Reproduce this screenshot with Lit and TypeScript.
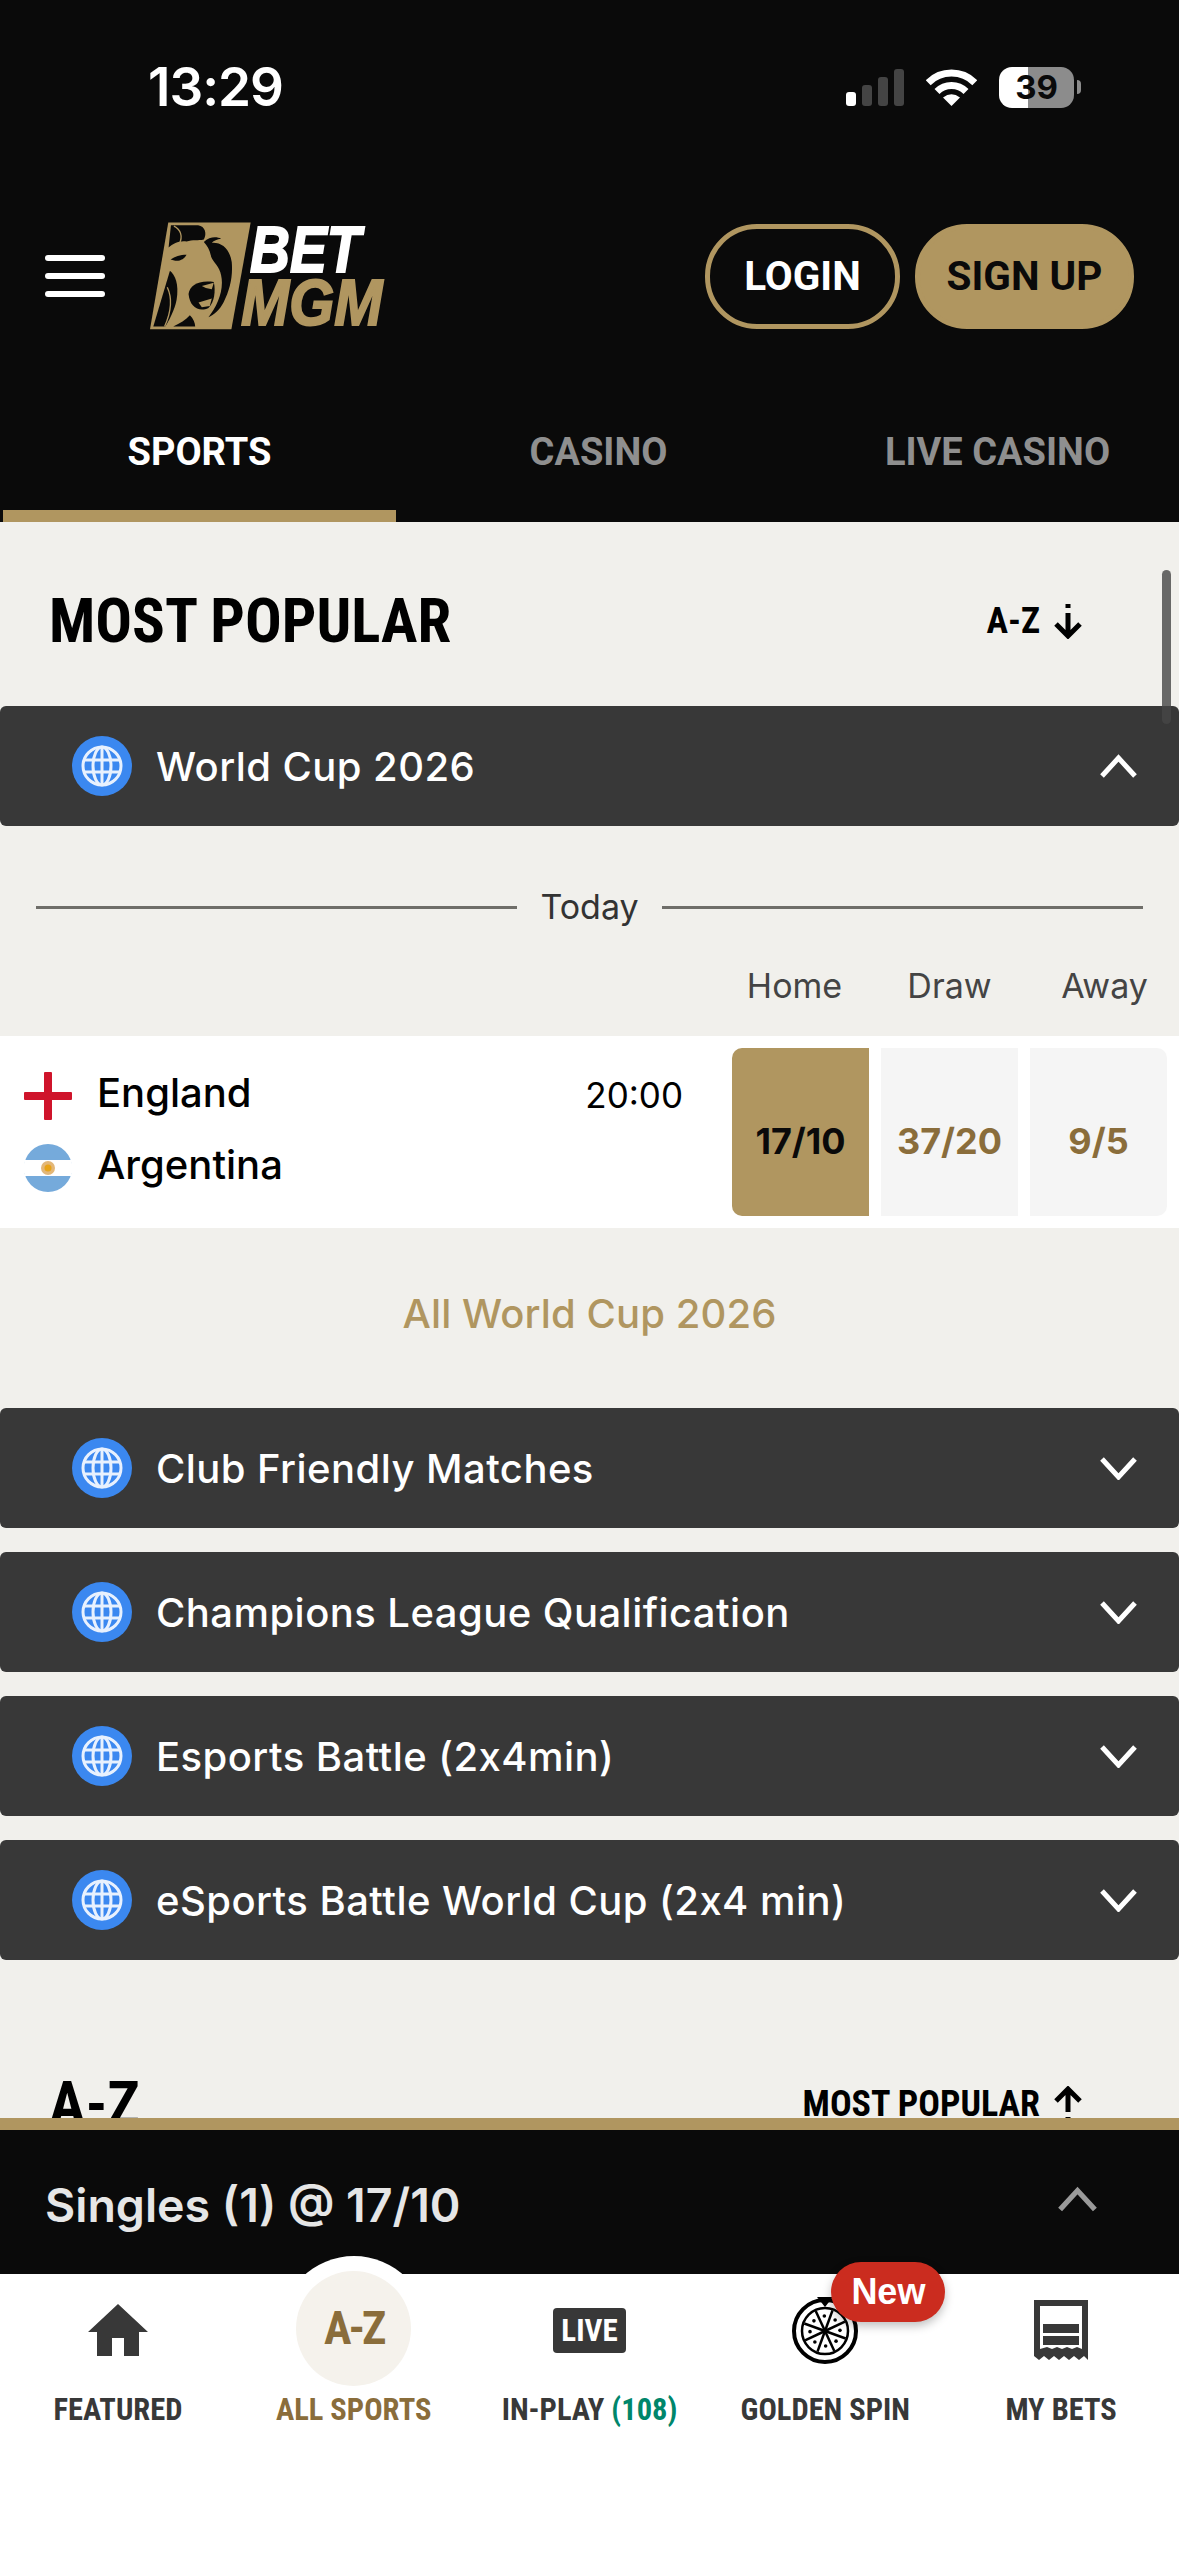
import { LitElement, html, css, svg } from "lit";
import { customElement } from "lit/decorators.js";

const leagues = [
  "Club Friendly Matches",
  "Champions League Qualification",
  "Esports Battle (2x4min)",
  "eSports Battle World Cup (2x4 min)",
];

const globe = html`<svg class="globe" viewBox="0 0 60 60">
  <circle cx="30" cy="30" r="30" fill="#3b88f0"></circle>
  <g fill="none" stroke="#e8f1fe" stroke-width="3">
    <circle cx="30" cy="30" r="19"></circle>
    <ellipse cx="30" cy="30" rx="9" ry="19"></ellipse>
    <path d="M30 11v38M12 24h36M12 36h36"></path>
  </g>
</svg>`;

const chevron = (up: boolean) => html`<svg class="chevron" viewBox="0 0 37 24">
  <path
    d=${up ? "M2 22 18.500 4 35 22" : "M2 3 18.500 21 35 3"}
    fill="none"
    stroke="currentColor"
    stroke-width="5"
  ></path>
</svg>`;

const sortArrow = (up: boolean) => html`<svg
  class="sort-arrow"
  viewBox="0 0 30 36"
>
  <g fill="none" stroke="#000" stroke-width="5">
    ${up
      ? svg`<path d="M3 15 15 3 27 15M15 4v22M15 31v4"></path>`
      : svg`<path d="M3 21 15 33 27 21M15 32V10M15 1v4"></path>`}
  </g>
</svg>`;

// spokes and pips of the golden spin wheel
const wheelParts = Array.from({ length: 8 }, (_, i) => {
  const a = ((i * 45 + 20) * Math.PI) / 180;
  const b = a + (22.5 * Math.PI) / 180;
  return svg`
    <path d="M33 34L${33 + 22 * Math.sin(a)} ${34 - 22 * Math.cos(a)}"></path>
    <circle cx=${33 + 15 * Math.sin(b)} cy=${34 - 15 * Math.cos(b)} r="1.800" fill="#000" stroke="none"></circle>
  `;
});

@customElement("app-root")
export class AppRoot extends LitElement {
  static styles = css`
    :host {
      display: flex;
      flex-direction: column;
      width: 1179px;
      height: 2556px;
      overflow: hidden;
      background: #f1f0ec;
      font-family: Inter, "Liberation Sans", sans-serif;
      color: #000;
    }

    .narrow {
      font-family: "Liberation Sans Narrow", "Roboto Condensed", "Liberation Sans", sans-serif;
      font-weight: 700;
    }

    /* top black area */
    .top {
      flex: none;
      background: #0a0a0a;
      color: #fff;
    }

    .status {
      height: 174px;
      box-sizing: border-box;
      padding: 0 98px 0 148px;
      display: flex;
      align-items: center;
      justify-content: space-between;
    }

    .time {
      font-size: 53px;
      font-weight: 600;
      letter-spacing: -1px;
    }

    .status-icons {
      display: flex;
      align-items: center;
    }

    .signal {
      width: 58px;
      height: 37px;
      margin-right: 22px;
    }

    .wifi {
      width: 51px;
      height: 37px;
      margin-right: 22px;
    }

    .battery {
      width: 75px;
      height: 41px;
      border-radius: 13px;
      background: linear-gradient(90deg, #fff 39%, #8c8c8c 39%);
      color: #0a0a0a;
      font-size: 33px;
      font-weight: 700;
      line-height: 41px;
      text-align: center;
    }

    .nub {
      width: 4px;
      height: 14px;
      margin-left: 3px;
      background: #8c8c8c;
      border-radius: 0 7px 7px 0;
    }

    .header {
      height: 204px;
      display: flex;
      align-items: center;
      padding: 0 45px;
    }

    .burger {
      width: 60px;
      display: flex;
      flex-direction: column;
      gap: 12px;
      margin-right: 45px;
    }

    .burger i {
      height: 6px;
      border-radius: 3px;
      background: #fff;
    }

    .logo {
      display: flex;
      align-items: center;
    }

    .lion {
      width: 101px;
      height: 108px;
    }

    .wordmark {
      margin-left: -10px;
      display: flex;
      flex-direction: column;
      font-family: "Liberation Sans", sans-serif;
      font-size: 65px;
      font-style: italic;
      font-weight: 700;
      line-height: 53px;
    }

    .wordmark span {
      transform-origin: left center;
      -webkit-text-stroke: 2px currentColor;
    }

    .bet {
      margin-left: 9px;
      color: #fff;
      transform: scaleX(0.85);
    }

    .mgm {
      color: #b09660;
      transform: scaleX(0.89);
    }

    .auth {
      margin-left: auto;
      display: flex;
      gap: 15px;
    }

    .auth button {
      height: 105px;
      border-radius: 52px;
      border: 5px solid #b09660;
      box-sizing: border-box;
      font-family: Roboto, sans-serif;
      font-size: 40.500px;
      font-weight: 700;
      padding: 0;
    }

    .login {
      width: 195px;
      background: #0a0a0a;
      color: #fff;
    }

    .signup {
      width: 219px;
      background: #b09660;
      color: #0a0a0a;
    }

    .tabs {
      display: grid;
      grid-template-columns: repeat(3, 393px);
      gap: 6px;
      padding-left: 3px;
      height: 144px;
      box-sizing: border-box;
      font-family: Roboto, sans-serif;
      font-weight: 700;
    }

    .tab {
      display: flex;
      align-items: center;
      justify-content: center;
      padding-top: 16px;
      font-size: 38px;
      color: #8f8f8f;
      border-bottom: 12px solid transparent;
    }

    .tab.on {
      color: #fff;
      border-bottom-color: #b09660;
    }

    /* scrolled content */
    .content {
      flex: 1;
      min-height: 0;
      overflow: hidden;
      position: relative;
    }

    .scrollbar {
      position: absolute;
      top: 48px;
      right: 8px;
      width: 9px;
      height: 154px;
      border-radius: 5px;
      background: rgba(70, 70, 70, 0.8);
    }

    .section-head {
      height: 170px;
      padding: 14px 96px 0 49px;
      display: flex;
      align-items: center;
      justify-content: space-between;
    }

    .section-head.second {
      margin-top: 45px;
    }

    .section-head h2 {
      margin: 0;
      font-size: 61px;
    }

    .sort {
      display: flex;
      align-items: center;
      gap: 13px;
      font-size: 36px;
    }

    .sort-arrow {
      width: 30px;
      height: 36px;
    }

    .league {
      height: 120px;
      display: flex;
      align-items: center;
      padding: 0 42px 0 72px;
      background: #383838;
      color: #fff;
      border-radius: 6px;
      font-size: 40px;
      font-weight: 500;
      letter-spacing: 0.45px;
    }

    .globe {
      width: 60px;
      height: 60px;
      margin-right: 24px;
    }

    .chevron {
      width: 37px;
      height: 24px;
      margin-left: auto;
    }

    .leagues {
      display: flex;
      flex-direction: column;
      gap: 24px;
    }

    .day {
      margin-top: 58px;
      padding: 0 36px;
      display: flex;
      align-items: center;
      gap: 23px;
      font-size: 34px;
      line-height: 46px;
      color: #333;
    }

    .day i {
      flex: 1;
      height: 3px;
      background: #6f6e69;
    }

    .odds-head {
      margin: 30px 0 26px;
      height: 50px;
      display: grid;
      grid-template-columns: 137px 137px 137px;
      gap: 18px;
      padding-right: 6px;
      justify-content: end;
      align-items: center;
      font-size: 34px;
      color: #444;
      text-align: center;
    }

    .match {
      height: 192px;
      box-sizing: border-box;
      background: #fff;
      padding: 12px;
      display: flex;
    }

    .teams {
      flex: 1;
      display: flex;
      flex-direction: column;
      gap: 24px;
      padding: 24px 0 0 12px;
      font-size: 40px;
      font-weight: 500;
    }

    .team {
      display: flex;
      align-items: center;
      gap: 25px;
      height: 48px;
      line-height: 42px;
    }

    .team span {
      margin-top: -6px;
    }

    .team svg {
      width: 48px;
      height: 48px;
    }

    .kick {
      margin: 22px 49px 0 0;
      font-size: 35px;
      line-height: 50px;
    }

    .prices {
      display: grid;
      grid-template-columns: repeat(3, 137px);
      gap: 12px;
    }

    .price {
      display: flex;
      align-items: center;
      justify-content: center;
      padding-top: 18px;
      background: #f5f5f5;
      color: #8a6d3b;
      font-size: 36px;
      font-weight: 700;
    }

    .price.picked {
      background: #b09660;
      color: #0a0a0a;
      border-radius: 10px 0 0 10px;
    }

    .price:last-child {
      border-radius: 0 10px 10px 0;
    }

    .all {
      height: 180px;
      box-sizing: border-box;
      padding-bottom: 10px;
      display: flex;
      align-items: center;
      justify-content: center;
      color: #b09660;
      font-size: 40px;
      font-weight: 500;
      letter-spacing: 0.1px;
    }

    /* bet slip bar */
    .slip {
      flex: none;
      height: 156px;
      box-sizing: border-box;
      border-top: 12px solid #b09660;
      background: #0a0a0a;
      color: #e6e6e6;
      padding: 6px 82px 0 45px;
      display: flex;
      align-items: center;
      justify-content: space-between;
      font-size: 46.500px;
      font-weight: 600;
    }

    .slip .chevron {
      width: 39px;
      height: 26px;
      color: #9a9a9a;
      margin-top: -12px;
    }

    /* bottom nav */
    .nav {
      flex: none;
      height: 282px;
      box-sizing: border-box;
      background: #fff;
      display: grid;
      grid-template-columns: repeat(5, 1fr);
      position: relative;
    }

    .item {
      position: relative;
      display: flex;
      flex-direction: column;
      align-items: center;
      font-size: 30.500px;
      color: #383838;
    }

    .icon {
      position: relative;
      height: 112px;
      display: flex;
      align-items: center;
      justify-content: center;
    }

    .item small {
      position: relative;
      margin-top: 4px;
      font: inherit;
      line-height: 40px;
    }

    .item em {
      font-style: normal;
      color: #00866b;
    }

    .item.on {
      color: #8a6d3b;
    }

    .bump {
      position: absolute;
      top: -18px;
      left: 50%;
      width: 148px;
      height: 148px;
      margin-left: -74px;
      border-radius: 50%;
      background: #fff;
    }

    .az {
      width: 115px;
      height: 115px;
      margin-top: -4px;
      border-radius: 50%;
      background: #f5f2ec;
      display: flex;
      align-items: center;
      justify-content: center;
      font-size: 46px;
      letter-spacing: -3px;
    }

    .live {
      width: 73px;
      height: 45px;
      border-radius: 4px;
      background: #383838;
      color: #fff;
      font-size: 31px;
      line-height: 45px;
      text-align: center;
    }

    .new {
      position: absolute;
      top: -12px;
      left: 124px;
      width: 114px;
      height: 60px;
      border-radius: 30px;
      background: #cb2c1f;
      color: #fff;
      font-family: "Liberation Sans", sans-serif;
      font-size: 36px;
      font-weight: 700;
      line-height: 60px;
      text-align: center;
      box-shadow: 0 4px 10px rgba(0, 0, 0, 0.25);
    }
  `;

  private renderLogo() {
    return html`<div class="logo">
      <svg class="lion" viewBox="60 66 304 324">
        <path d="M115 67H363L305 388H60Z" fill="#b09660"></path>
        <g fill="#0a0a0a">
          <path d="M123 75H205C226 78 232 100 222 118C205 122 188 118 170 124C150 120 130 130 116 142Z"></path>
          <path d="M222 126C240 108 262 110 274 116C262 118 252 122 246 128C276 126 300 146 306 186C310 230 300 270 282 306C270 330 252 345 236 352C262 320 284 270 274 226C270 200 250 186 244 170C240 150 232 136 222 126Z"></path>
          <path d="M176 282C180 256 205 240 252 246C258 274 254 306 236 324C208 338 180 322 176 282Z"></path>
          <path d="M120 212C135 225 148 250 140 300C134 330 118 360 106 380H70Z"></path>
          <path d="M180 346C190 355 196 370 196 380H130C150 370 168 360 180 346Z"></path>
          <path d="M122 178C135 170 150 164 170 164C164 176 150 184 136 182Z"></path>
        </g>
        <g fill="none" stroke="#b09660" stroke-width="4">
          <path d="M132 78C152 88 160 108 148 132"></path>
          <path d="M112 262C128 296 122 340 104 380"></path>
        </g>
        <path d="M216 258 252 248 246 268 228 264ZM206 308 246 296 240 318 216 322Z" fill="#b09660"></path>
      </svg>
      <div class="wordmark">
        <span class="bet">BET</span>
        <span class="mgm">MGM</span>
      </div>
    </div>`;
  }

  private renderTop() {
    return html`<div class="top">
      <div class="status">
        <span class="time">13:29</span>
        <div class="status-icons">
          <svg class="signal" viewBox="0 0 58 37">
            <rect x="0" y="23" width="10" height="14" rx="3" fill="#fff"></rect>
            <rect x="16" y="16" width="10" height="21" rx="3" fill="#444"></rect>
            <rect x="32" y="8" width="10" height="29" rx="3" fill="#444"></rect>
            <rect x="48" y="0" width="10" height="37" rx="3" fill="#444"></rect>
          </svg>
          <svg class="wifi" viewBox="0 0 51 37">
            <path d="M2.200 13.700A33 33 0 0 1 48.800 13.700M11 22.500A20.500 20.500 0 0 1 40 22.500" fill="none" stroke="#fff" stroke-width="7"></path>
            <path d="M25.500 37 17 28.500Q25.500 22 34 28.500Z" fill="#fff"></path>
          </svg>
          <div class="battery">39</div>
          <div class="nub"></div>
        </div>
      </div>
      <div class="header">
        <div class="burger"><i></i><i></i><i></i></div>
        ${this.renderLogo()}
        <div class="auth">
          <button class="login">LOGIN</button>
          <button class="signup">SIGN UP</button>
        </div>
      </div>
      <div class="tabs">
        <div class="tab on">SPORTS</div>
        <div class="tab">CASINO</div>
        <div class="tab">LIVE CASINO</div>
      </div>
    </div>`;
  }

  private renderMatch() {
    return html`<div class="day"><i></i>Today<i></i></div>
      <div class="odds-head">
        <span>Home</span><span>Draw</span><span>Away</span>
      </div>
      <div class="match">
        <div class="teams">
          <div class="team">
            <svg viewBox="0 0 48 48">
              <rect x="20" y="0" width="8" height="48" rx="1" fill="#cf142b"></rect>
              <rect x="0" y="20" width="48" height="8" rx="1" fill="#cf142b"></rect>
            </svg>
            <span>England</span>
          </div>
          <div class="team">
            <svg viewBox="0 0 48 48">
              <circle cx="24" cy="24" r="24" fill="#75aadb"></circle>
              <path d="M1 16H47A24 24 0 0 1 47 32H1A24 24 0 0 1 1 16Z" fill="#fff"></path>
              <circle cx="24" cy="24" r="7" fill="#e3b778"></circle>
              <circle cx="24" cy="24" r="3.500" fill="#e8a317"></circle>
            </svg>
            <span>Argentina</span>
          </div>
        </div>
        <div class="kick">20:00</div>
        <div class="prices">
          <div class="price picked">17/10</div>
          <div class="price">37/20</div>
          <div class="price">9/5</div>
        </div>
      </div>
      <div class="all">All World Cup 2026</div>`;
  }

  private renderLeague(name: string, open = false) {
    return html`<div class="league">${globe}<span>${name}</span>${chevron(open)}</div>`;
  }

  private renderContent() {
    return html`<div class="content">
      <div class="section-head">
        <h2 class="narrow">MOST POPULAR</h2>
        <div class="sort narrow">A-Z ${sortArrow(false)}</div>
      </div>
      ${this.renderLeague("World Cup 2026", true)} ${this.renderMatch()}
      <div class="leagues">${leagues.map((l) => this.renderLeague(l))}</div>
      <div class="section-head second">
        <h2 class="narrow">A-Z</h2>
        <div class="sort narrow">MOST POPULAR ${sortArrow(true)}</div>
      </div>
      <div class="scrollbar"></div>
    </div>`;
  }

  private renderNav() {
    return html`<div class="nav narrow">
      <div class="item">
        <div class="icon">
          <svg width="60" height="52" viewBox="0 0 60 52">
            <path d="M30 0 60 28H51V52H36V34H24V52H9V28H0Z" fill="#383838"></path>
          </svg>
        </div>
        <small>FEATURED</small>
      </div>
      <div class="item on">
        <div class="bump"></div>
        <div class="icon"><div class="az">A-Z</div></div>
        <small>ALL SPORTS</small>
      </div>
      <div class="item">
        <div class="icon"><div class="live">LIVE</div></div>
        <small>IN-PLAY <em>(108)</em></small>
      </div>
      <div class="item">
        <div class="icon">
          <svg class="wheel" width="66" height="67" viewBox="0 0 66 67">
            <g fill="none" stroke="#000" stroke-width="2.500">
              <circle cx="33" cy="34" r="31" stroke-width="4"></circle>
              <circle cx="33" cy="34" r="23"></circle>
              ${wheelParts}
            </g>
            <path d="M25 0H41L33 10Z" fill="#000"></path>
          </svg>
        </div>
        <small>GOLDEN SPIN</small>
        <div class="new">New</div>
      </div>
      <div class="item">
        <div class="icon">
          <svg width="54" height="60" viewBox="0 0 54 60">
            <path d="M0 0H54V60L50 56 45 60 40 56 35 60 30 56 25 60 20 56 15 60 10 56 5 60 0 56Z" fill="#383838"></path>
            <path d="M6 6H48V49L43 47 38 49 33 47 28 49 23 47 18 49 13 47 6 49Z" fill="#fff"></path>
            <rect x="9" y="24" width="36" height="9" fill="#383838"></rect>
            <rect x="9" y="36" width="36" height="9" fill="#383838"></rect>
          </svg>
        </div>
        <small>MY BETS</small>
      </div>
    </div>`;
  }

  render() {
    return html`
      ${this.renderTop()} ${this.renderContent()}
      <div class="slip"><span>Singles (1) @ 17/10</span>${chevron(true)}</div>
      ${this.renderNav()}
    `;
  }
}
